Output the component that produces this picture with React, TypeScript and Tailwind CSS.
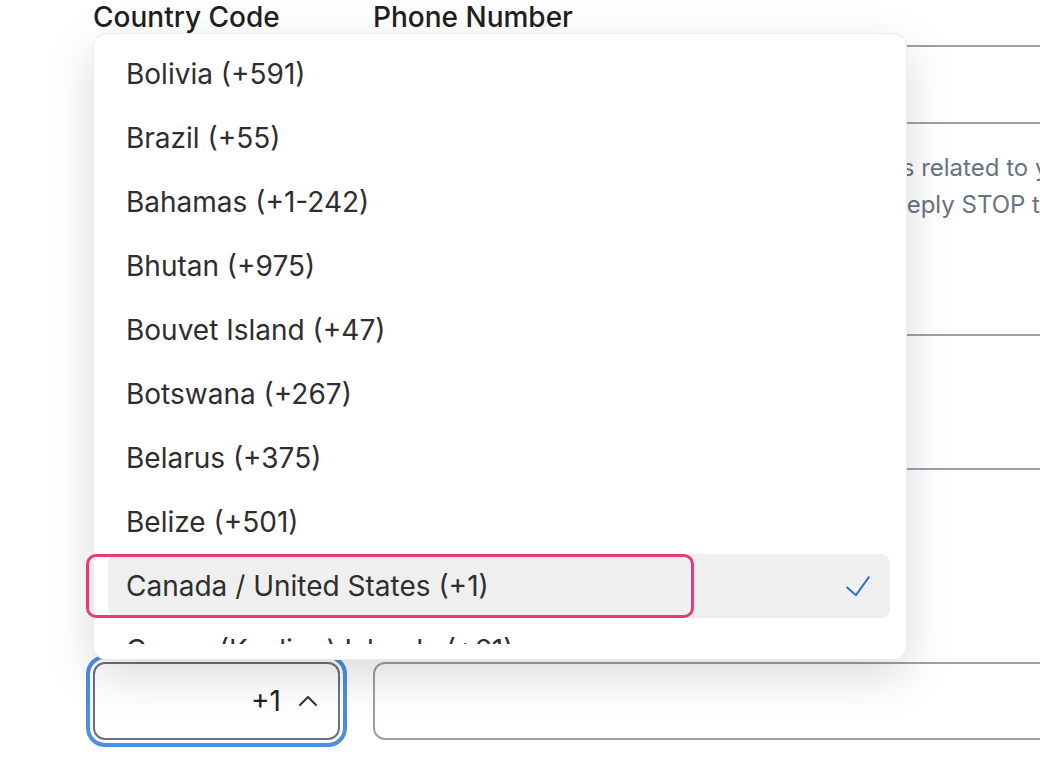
import { ChevronUp } from "lucide-react";

const countries = [
  "Bolivia (+591)",
  "Brazil (+55)",
  "Bahamas (+1-242)",
  "Bhutan (+975)",
  "Bouvet Island (+47)",
  "Botswana (+267)",
  "Belarus (+375)",
  "Belize (+501)",
  "Canada / United States (+1)",
  "Cocos (Keeling) Islands (+61)",
  "Congo (+242)",
];

const selected = "Canada / United States (+1)";

function CheckMark() {
  return (
    <svg width="24" height="21" viewBox="0 0 24 21" fill="none" className="text-[#2f6fd6]">
      <path d="M1.2 11.5 L10 19.2 L22.8 1.2" stroke="currentColor" strokeWidth="2" strokeLinecap="round" strokeLinejoin="round" />
    </svg>
  );
}

function CountryMenu() {
  return (
    <div className="absolute left-[93px] top-[33px] w-[814px] h-[627px] rounded-[14px] bg-white border border-black/[0.07] shadow-[0_16px_48px_rgba(0,0,0,0.15)] flex flex-col pt-[8px] pb-[15px]">
      <div className="flex-1 overflow-hidden pl-[14px] pr-[16px]">
        {countries.map((name) => {
          const isSelected = name === selected;
          return (
            <div
              key={name}
              className={
                isSelected
                  ? "h-16 flex items-center justify-between pl-[18px] pr-[20px] rounded-[9px] bg-[#efefef]"
                  : "h-16 flex items-center justify-between pl-[18px] pr-[20px] rounded-[9px]"
              }
            >
              <span className="text-[28px] text-[#2e2e2e] whitespace-nowrap">{name}</span>
              {isSelected && <CheckMark />}
            </div>
          );
        })}
      </div>
    </div>
  );
}

export default function App() {
  return (
    <div
      className="relative w-[1040px] h-[759px] overflow-hidden bg-white"
      style={{ fontFamily: "Inter, 'Noto Sans', sans-serif" }}
    >
      <div className="pl-[93px] flex flex-col">
        {/* labels */}
        <div className="flex gap-[33px] h-[34px]">
          <div className="w-[247px] shrink-0 text-[28px] font-medium text-[#1f1f1f] leading-[34px] whitespace-nowrap">Country Code</div>
          <div className="text-[28px] font-medium text-[#1f1f1f] leading-[34px] whitespace-nowrap">Phone Number</div>
        </div>

        {/* first row (covered) */}
        <div className="flex gap-[33px] mt-[11px]">
          <div className="w-[247px] shrink-0 h-[79px] border-2 border-gray-500 rounded-[12px]" />
          <div className="w-[800px] shrink-0 h-[79px] border-2 border-gray-400 rounded-[12px]" />
        </div>

        <div className="ml-[280px] w-[900px] mt-[25px] text-[24px] leading-[37px] text-gray-500 whitespace-nowrap">
          <div>You consent to receive recurring text messages related to your account.</div>
          <div>Message frequency varies. Data rates apply.&nbsp; Reply STOP to unsubscribe.</div>
        </div>

        <div className="ml-[280px] w-[800px] h-[136px] mt-[111px] border-2 border-gray-400 rounded-[12px]" />

        {/* bottom row */}
        <div className="flex gap-[33px] mt-[192px]">
          <div className="w-[247px] shrink-0 h-[78px] border-2 border-gray-500 rounded-[12px] outline-4 outline-[#4a8fe3] outline-offset-[3px] flex items-center justify-end gap-[11px] pr-[14px] bg-white">
            <span className="text-[28px] text-[#222]">+1</span>
            <ChevronUp size={32} strokeWidth={1.5} className="text-[#333]" />
          </div>
          <div className="w-[800px] shrink-0 h-[78px] border-2 border-gray-400 rounded-[12px]" />
        </div>
      </div>

      <CountryMenu />

      {/* highlight annotation */}
      <div className="absolute left-[86px] top-[554px] w-[608px] h-[64px] border-[3px] border-[#e8397a] rounded-[10px]" />
    </div>
  );
}
